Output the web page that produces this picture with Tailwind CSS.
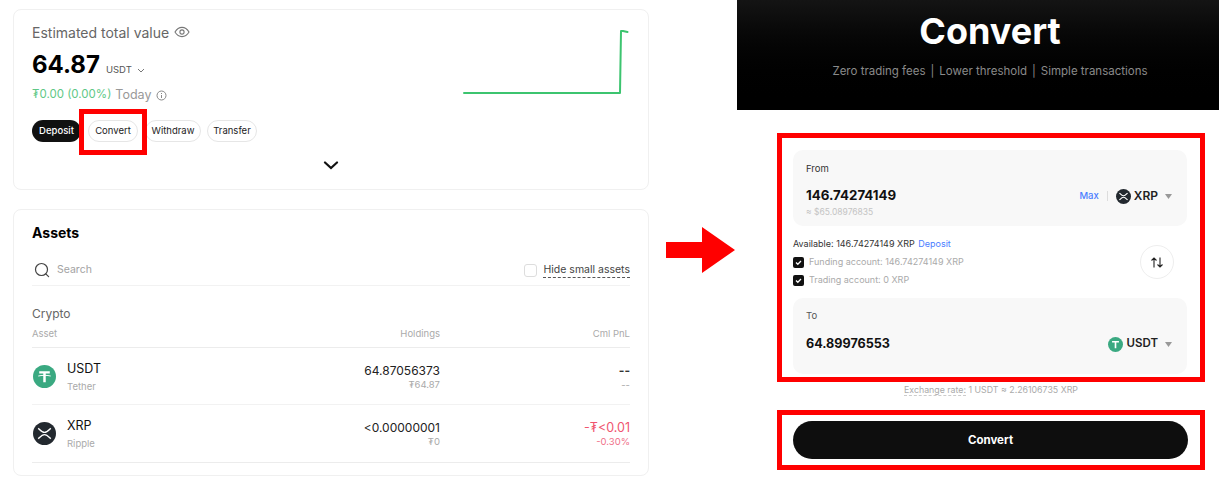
<!DOCTYPE html>
<html lang="en">
<head>
<meta charset="utf-8">
<title>Convert</title>
<script src="https://cdn.jsdelivr.net/npm/@tailwindcss/browser@4"></script>
</head>
<body class="bg-white overflow-hidden font-['Inter','Noto_Sans',sans-serif] text-[#111]">
<div class="flex w-[1219px] h-[500px]">

  <!-- Left column -->
  <div class="w-[649px] pl-[13px] pt-[9px] flex flex-col gap-[19px] shrink-0">
    <section class="relative h-[181px] rounded-[8px] border border-[#f0f0f0] pl-[18px] pt-[13px]">
      <div class="flex items-center gap-[5px] h-[18px] text-[14px] text-[#666]">
        <span>Estimated total value</span>
        <svg width="16" height="12" viewBox="0 0 16 12" fill="none" stroke="#777" stroke-width="1.1"><path d="M1 6c1.8-3 4-4.6 7-4.6S13.200 3 15 6c-1.800 3-4 4.600-7 4.600S2.800 9 1 6z"/><circle cx="8" cy="6" r="2.100"/></svg>
      </div>
      <div class="flex items-end mt-[9px] h-[30px]">
        <span class="text-[24px] leading-[30px] font-bold text-black">64.87</span>
        <span class="text-[9.500px] text-[#555] ml-[6px] mb-[3px]">USDT</span>
        <svg class="ml-[5px] mb-[7px]" width="8" height="5" viewBox="0 0 8 5" fill="none" stroke="#777"><path d="M1 1l3 3 3-3"/></svg>
      </div>
      <div class="flex items-center mt-[6px] h-[18px] text-[12.500px]">
        <span class="text-[#5fc886] text-[11.500px]">₮0.00 (0.00%)</span>
        <span class="text-[#999] ml-[4px]">Today</span>
        <svg class="ml-[5px]" width="11" height="11" viewBox="0 0 11 11" fill="none" stroke="#888"><circle cx="5.500" cy="5.500" r="4.500"/><path d="M5.500 5v3M5.500 3v1"/></svg>
      </div>
      <div class="flex items-center mt-[16px] text-[9.500px]">
        <span class="h-[22px] w-[49px] rounded-full bg-[#111] text-white font-medium flex items-center justify-center">Deposit</span>
        <span class="relative h-[22px] w-[50px] ml-[7px] rounded-full border border-[#e6e6e6] flex items-center justify-center text-[#222]">Convert
          <span class="absolute left-[-10px] top-[-12px] w-[68px] h-[46px] border-[5px] border-[#ff0000]"></span>
        </span>
        <span class="h-[22px] w-[56px] ml-[7px] rounded-full border border-[#e6e6e6] flex items-center justify-center text-[#222]">Withdraw</span>
        <span class="h-[22px] w-[50px] ml-[6px] rounded-full border border-[#e6e6e6] flex items-center justify-center text-[#222]">Transfer</span>
      </div>
      <div class="w-[598px] flex justify-center mt-[19px]">
        <svg width="16" height="9" viewBox="0 0 16 9" fill="none" stroke="#111" stroke-width="2.200" stroke-linecap="round"><path d="M2 1.500l6 5.500 6-5.500"/></svg>
      </div>
      <svg class="absolute left-[449px] top-[19px]" width="170" height="68" viewBox="0 0 170 68" fill="none" stroke="#3cc46f" stroke-width="2" stroke-linecap="round" stroke-linejoin="round"><path d="M1 64H157L158 2H160L164.500 3"/></svg>
    </section>

    <section class="h-[267px] rounded-[8px] border border-[#f0f0f0] px-[18px]">
      <h2 class="text-[14px] font-bold text-black mt-[14px] h-[18px] leading-[18px]">Assets</h2>
      <div class="flex items-center justify-between h-[31px] mt-[13px] border-b border-[#f2f2f2]">
        <div class="flex items-center">
          <svg class="ml-[2px]" width="16" height="16" viewBox="0 0 16 16" fill="none" stroke="#444" stroke-width="1.200" stroke-linecap="round"><circle cx="7.500" cy="7.500" r="6"/><path d="M11.800 11.800l2.800 2.800"/></svg>
          <span class="ml-[7px] text-[10.500px] text-[#a3a3a3]">Search</span>
        </div>
        <div class="flex items-center">
          <span class="w-[13px] h-[13px] rounded-[3px] border border-[#ddd]"></span>
          <span class="ml-[6px] text-[10.500px] leading-[14px] text-[#444] border-b border-dashed border-[#555]">Hide small assets</span>
        </div>
      </div>
      <div class="text-[12px] text-[#666] mt-[19px] h-[18px] leading-[18px]">Crypto</div>
      <div class="grid grid-cols-[1fr_200px_190px] text-[9.500px] text-[#aaa] mt-[3px] h-[22px] pt-[1px] border-b border-[#ececec] leading-[14px]">
        <span>Asset</span><span class="text-right">Holdings</span><span class="text-right">Cml PnL</span>
      </div>
      <div class="grid grid-cols-[1fr_200px_190px] h-[57px] border-b border-[#f2f2f2] items-center">
        <div class="flex items-center">
          <svg class="ml-[1px]" width="23" height="23" viewBox="0 0 24 24"><circle cx="12" cy="12" r="12" fill="#3aa981"/><path d="M6.500 6.500h11v2.300h-4.200v9.200h-2.600V8.800H6.500z" fill="#fff"/><path d="M5.500 11.500c3-.9 10-.9 13 0" stroke="#fff" fill="none"/></svg>
          <div class="ml-[11px] pt-[2px]">
            <div class="text-[12.500px] leading-[16px] text-[#111]">USDT</div>
            <div class="text-[9.500px] leading-[14px] mt-[3px] text-[#aaa]">Tether</div>
          </div>
        </div>
        <div class="text-right pt-[1px]">
          <div class="text-[12px] leading-[16px] text-[#222]">64.87056373</div>
          <div class="text-[9.500px] leading-[12px] text-[#aaa]">₮64.87</div>
        </div>
        <div class="text-right pt-[1px]">
          <div class="text-[12px] leading-[16px] font-bold text-[#333]">--</div>
          <div class="text-[9.500px] leading-[12px] text-[#aaa]">--</div>
        </div>
      </div>
      <div class="grid grid-cols-[1fr_200px_190px] h-[58px] border-b border-[#ececec] items-center">
        <div class="flex items-center">
          <svg class="ml-[1px]" width="23" height="23" viewBox="0 0 24 24"><circle cx="12" cy="12" r="12" fill="#23292f"/><path d="M5.500 6.500C9 10 9.500 10.800 12 10.800S15 10 18.500 6.500M5.500 17.500C9 14 9.500 13.200 12 13.200S15 14 18.500 17.500" stroke="#fff" stroke-width="1.500" fill="none"/></svg>
          <div class="ml-[11px] pt-[2px]">
            <div class="text-[12.500px] leading-[16px] text-[#111]">XRP</div>
            <div class="text-[9.500px] leading-[14px] mt-[3px] text-[#aaa]">Ripple</div>
          </div>
        </div>
        <div class="text-right">
          <div class="text-[12px] leading-[16px] text-[#222]">&lt;0.00000001</div>
          <div class="text-[9.500px] leading-[12px] text-[#aaa]">₮0</div>
        </div>
        <div class="text-right">
          <div class="text-[12.500px] leading-[16px] text-[#f0556f]">-₮&lt;0.01</div>
          <div class="text-[9.500px] leading-[12px] text-[#f0718a]">-0.30%</div>
        </div>
      </div>
    </section>
  </div>

  <!-- Arrow -->
  <div class="w-[88px] shrink-0 pl-[17px] pt-[227px]">
    <svg width="70" height="46" viewBox="0 0 70 46"><path d="M0 15H36V0L69 23 36 46V31H0z" fill="#ff0000"/></svg>
  </div>

  <!-- Right column -->
  <div class="w-[482px] shrink-0">
    <header class="h-[110px] bg-gradient-to-b from-[#141414] to-black flex flex-col items-center pt-[9px] pl-[24px]">
      <h1 class="text-[36px] leading-[44px] font-bold text-white">Convert</h1>
      <p class="text-[11.500px] text-[#8a8a8a] mt-[10px] leading-[16px] whitespace-nowrap">Zero trading fees<span class="mx-[5px]">|</span>Lower threshold<span class="mx-[5px]">|</span>Simple transactions</p>
    </header>

    <div class="ml-[40px] mt-[23px] w-[428px] h-[249px] border-[5px] border-[#ff0000] px-[11px] pt-[12px]">
      <div class="h-[76px] w-[394px] rounded-[10px] bg-[#f8f8f8] px-[13px] pt-[13px]">
        <div class="text-[9.500px] leading-[12px] text-[#333]">From</div>
        <div class="flex items-center justify-between mt-[11px] h-[20px]">
          <span class="text-[13.300px] font-bold text-[#111]">146.74274149</span>
          <div class="flex items-center">
            <span class="text-[9.500px] font-medium text-[#4a7dff]">Max</span>
            <span class="w-px h-[10px] bg-[#ddd] mx-[8px]"></span>
            <svg width="15" height="15" viewBox="0 0 24 24"><circle cx="12" cy="12" r="12" fill="#23292f"/><path d="M5.500 6.500C9 10 9.500 10.800 12 10.800S15 10 18.500 6.500M5.500 17.500C9 14 9.500 13.200 12 13.200S15 14 18.500 17.500" stroke="#fff" stroke-width="1.800" fill="none"/></svg>
            <span class="ml-[3px] text-[12px] font-semibold text-[#222]">XRP</span>
            <svg class="ml-[7px] mr-[2px]" width="7" height="5" viewBox="0 0 7 5"><path d="M0 0h7L3.500 5z" fill="#999"/></svg>
          </div>
        </div>
        <div class="text-[8.500px] leading-[12px] text-[#c4c4c4]">≈ $65.08976835</div>
      </div>

      <div class="relative h-[72px] pt-[12px] text-[9px] leading-[12px]">
        <div class="text-[#333]">Available: 146.74274149 XRP <span class="text-[#4a7dff] ml-[1px]">Deposit</span></div>
        <div class="flex items-center mt-[6px] h-[12px] text-[#aaa]">
          <svg width="11" height="11" viewBox="0 0 11 11"><rect width="11" height="11" rx="2" fill="#111"/><path d="M3 5.500l1.800 1.800L8 4" stroke="#fff" stroke-width="1.300" fill="none"/></svg>
          <span class="ml-[5px]">Funding account: 146.74274149 XRP</span>
        </div>
        <div class="flex items-center mt-[6px] h-[12px] text-[#aaa]">
          <svg width="11" height="11" viewBox="0 0 11 11"><rect width="11" height="11" rx="2" fill="#111"/><path d="M3 5.500l1.800 1.800L8 4" stroke="#fff" stroke-width="1.300" fill="none"/></svg>
          <span class="ml-[5px]">Trading account: 0 XRP</span>
        </div>
        <div class="absolute left-[347px] top-[19px] w-[34px] h-[34px] rounded-full border border-[#eee] flex items-center justify-center">
          <svg width="14" height="11" viewBox="0 0 14 11" fill="none" stroke="#222" stroke-width="1.100"><path d="M4 10.500V1M1.500 3.500L4 1l2.500 2.500M10 .5V10M7.500 7.500L10 10l2.500-2.500"/></svg>
        </div>
      </div>

      <div class="h-[76px] w-[394px] rounded-[10px] bg-[#f8f8f8] px-[13px] pt-[12px]">
        <div class="text-[9.500px] leading-[12px] text-[#555]">To</div>
        <div class="flex items-center justify-between mt-[12px] h-[20px]">
          <span class="text-[12.600px] font-bold text-[#111]">64.89976553</span>
          <div class="flex items-center">
            <svg width="15" height="15" viewBox="0 0 24 24"><circle cx="12" cy="12" r="12" fill="#3aa981"/><path d="M6.500 6.500h11v2.300h-4.200v9.200h-2.600V8.800H6.500z" fill="#fff"/></svg>
            <span class="ml-[4px] text-[11.500px] font-semibold text-[#222]">USDT</span>
            <svg class="ml-[7px] mr-[2px]" width="7" height="5" viewBox="0 0 7 5"><path d="M0 0h7L3.500 5z" fill="#999"/></svg>
          </div>
        </div>
      </div>
    </div>

    <div class="h-[28px] ml-[40px] w-[428px] flex justify-center pt-[1px] text-[8.800px] leading-[13px] text-[#aaa]">
      <span><span class="border-b border-dashed border-[#ccc]">Exchange rate:</span> 1 USDT ≈ 2.26106735 XRP</span>
    </div>

    <div class="ml-[40px] w-[428px] h-[60px] border-[5px] border-[#ff0000] px-[11px] pt-[6px]">
      <button class="w-[395px] h-[38px] pt-[2px] rounded-full bg-[#0e0e0e] text-white text-[11.500px] font-bold">Convert</button>
    </div>
  </div>

</div>
</body>
</html>
